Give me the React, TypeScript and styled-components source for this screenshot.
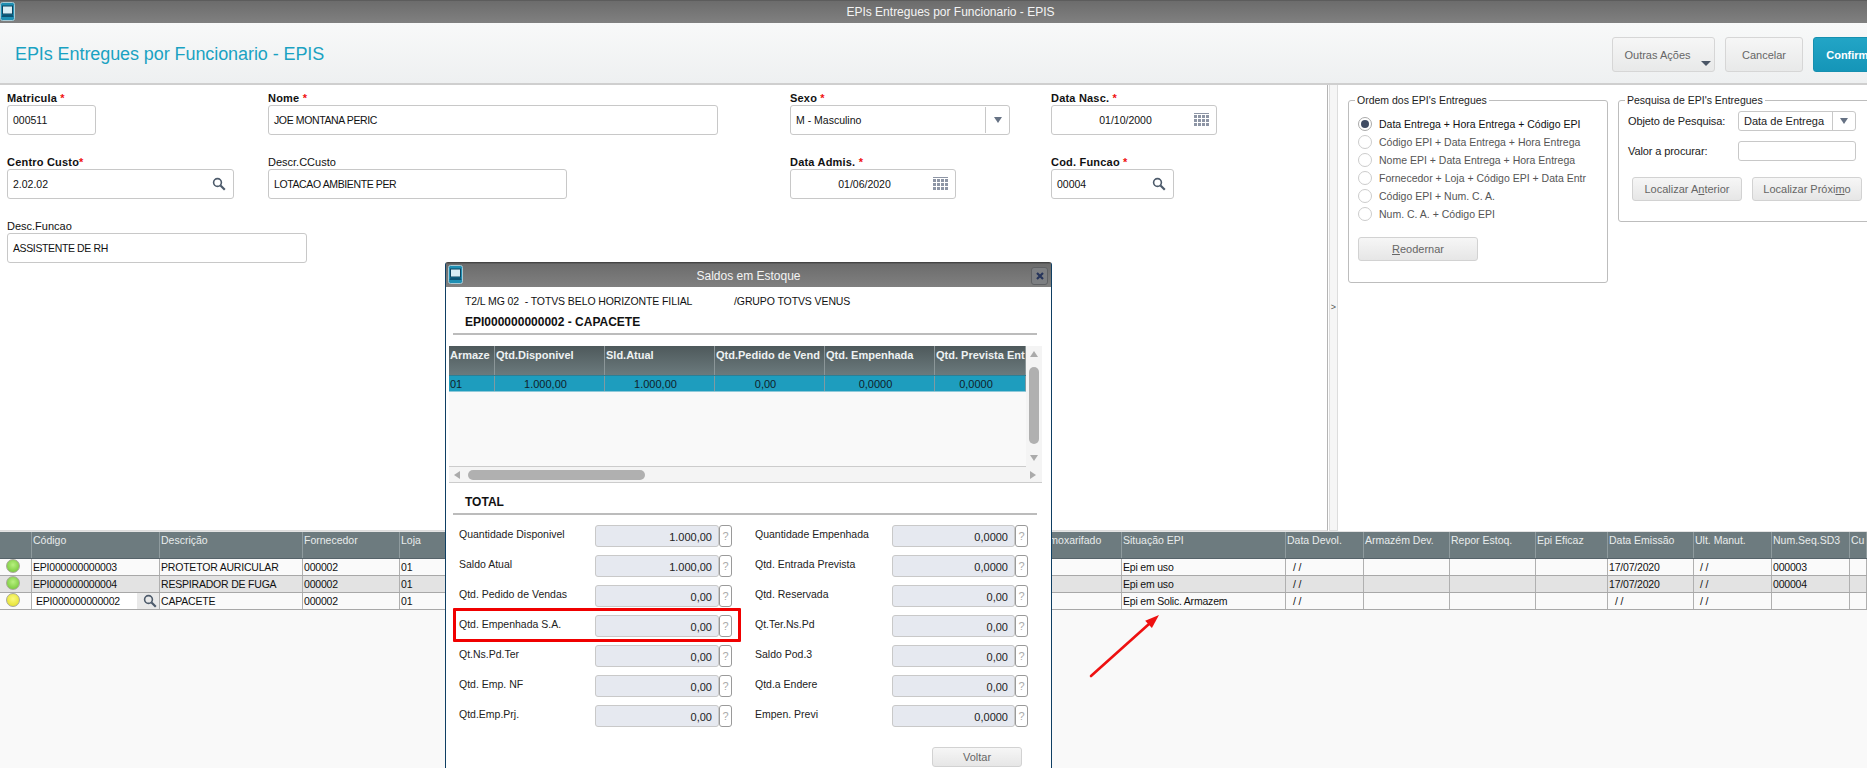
import React from 'react';
import styled, { createGlobalStyle } from 'styled-components';

const GlobalStyle = createGlobalStyle`
  html, body {
    margin: 0;
    overflow: hidden;
    background: #fff;
    font-family: "Liberation Sans", Arial, sans-serif;
    font-size: 11px;
    color: #222;
  }
  * { box-sizing: border-box; }
`;

const Page = styled.div`
  position: relative;
  display: flex;
  flex-direction: column;
  width: 1867px;
  height: 768px;
  overflow: hidden;
`;

const TitleBar = styled.div<{ $height: number }>`
  position: relative;
  flex: none;
  display: flex;
  align-items: center;
  justify-content: center;
  height: ${(p) => p.$height}px;
  background: linear-gradient(#6c6c6c, #808080);
  border-top: 1px solid #5c5c5c;
  color: #f4f4f4;
  font-size: 12px;
`;

const MainTitleText = styled.span`
  padding-left: 34px;
`;

const AppIconBox = styled.span<{ $left: number }>`
  position: absolute;
  left: ${(p) => p.$left}px;
  top: 1px;
  display: flex;
`;

const Header = styled.header`
  flex: none;
  display: flex;
  align-items: flex-start;
  justify-content: space-between;
  height: 62px;
  padding: 14px 0 0 15px;
  background: linear-gradient(#f8f9f9, #eef0f1);
  border-bottom: 2px solid #cfcfcf;
  overflow: hidden;
`;

const PageTitle = styled.h1`
  margin: 7px 0 0;
  font-size: 18px;
  font-weight: 400;
  line-height: 20px;
  letter-spacing: -0.08px;
  color: #1aa2c2;
`;

const Actions = styled.div`
  display: flex;
  gap: 10px;
  margin-right: -25px;
`;

const ActionButton = styled.button<{ $width: number; $primary?: boolean; $menu?: boolean }>`
  position: relative;
  width: ${(p) => p.$width}px;
  height: 35px;
  padding: 0 ${(p) => (p.$menu ? 12 : 0)}px 0 0;
  border: 1px solid ${(p) => (p.$primary ? '#1690b0' : '#d6d6d6')};
  border-radius: 3px;
  background: ${(p) => (p.$primary ? 'linear-gradient(#22a5c6, #1595b8)' : 'linear-gradient(#f6f6f6, #e8e9e9)')};
  color: ${(p) => (p.$primary ? '#fff' : '#666')};
  font: ${(p) => (p.$primary ? 'bold' : 'normal')} 11px "Liberation Sans", Arial, sans-serif;
`;

const ActionCaret = styled.span`
  position: absolute;
  right: 3px;
  bottom: 5px;
  border-left: 5px solid transparent;
  border-right: 5px solid transparent;
  border-top: 5px solid #4a5666;
`;

const Main = styled.main`
  flex: none;
  display: flex;
  height: 446px;
`;

const FormPanel = styled.section`
  flex: none;
  display: grid;
  grid-template-columns: 261px 522px 261px 1fr;
  grid-auto-rows: 64px;
  width: 1328px;
  padding: 5px 0 0 7px;
  border-right: 1px solid #b4b4b4;
  border-bottom: 1px solid #ddd;
`;

const Field = styled.div`
  display: flex;
  flex-direction: column;
`;

const FieldLabel = styled.label<{ $required?: boolean }>`
  height: 15px;
  padding-top: 1px;
  line-height: 14px;
  font-size: 11px;
  font-weight: ${(p) => (p.$required ? 700 : 400)};
  letter-spacing: ${(p) => (p.$required ? 0.2 : 0)}px;
  color: #111;
`;

const Star = styled.span`
  color: #f01010;
`;

const InputBox = styled.div<{ $width: number }>`
  display: flex;
  align-items: center;
  width: ${(p) => p.$width}px;
  height: 30px;
  padding: 0 7px 0 5px;
  background: #fff;
  border: 1px solid #c8c8c8;
  border-radius: 3px;
  font-size: 10.5px;
  color: #111;
`;

const InputValue = styled.span<{ $center?: boolean; $caps?: boolean }>`
  flex: 1;
  text-align: ${(p) => (p.$center ? 'center' : 'left')};
  letter-spacing: ${(p) => (p.$caps ? -0.38 : 0)}px;
`;

const SelectButton = styled.span`
  display: flex;
  align-items: center;
  justify-content: center;
  flex: none;
  width: 24px;
  height: 26px;
  margin-right: -7px;
  border-left: 1px solid #c8c8c8;
`;

const Caret = styled.span`
  border-left: 4px solid transparent;
  border-right: 4px solid transparent;
  border-top: 6px solid #667284;
`;

const Splitter = styled.div`
  flex: none;
  display: flex;
  align-items: center;
  justify-content: center;
  width: 9px;
  padding-bottom: 2px;
  margin-left: 1px;
  background: #f6f6f6;
  border-left: 1px solid #ddd;
  border-right: 1px solid #ddd;
  border-bottom: 1px solid #ddd;
  color: #555;
  font-size: 9px;
`;

const SidePanel = styled.aside`
  flex: none;
  display: flex;
  align-items: flex-start;
  gap: 10px;
  padding: 8px 0 0 10px;
`;

const GroupBox = styled.fieldset<{ $width: number; $height: number }>`
  flex: none;
  width: ${(p) => p.$width}px;
  height: ${(p) => p.$height}px;
  margin: 0;
  padding: 8px 0 0 9px;
  border: 1px solid #bdbdbd;
  border-radius: 3px;
`;

const GroupLegend = styled.legend`
  height: 14px;
  margin-left: -3px;
  padding: 0 2px;
  font-size: 10.5px;
  line-height: 14px;
  color: #222;
`;

const RadioList = styled.div`
  display: flex;
  flex-direction: column;
`;

const RadioRow = styled.div<{ $checked?: boolean }>`
  display: flex;
  align-items: center;
  gap: 7px;
  height: 18px;
  font-size: 10.5px;
  color: ${(p) => (p.$checked ? '#111' : '#555')};
`;

const RadioMark = styled.span<{ $checked?: boolean }>`
  flex: none;
  display: flex;
  align-items: center;
  justify-content: center;
  width: 14px;
  height: 14px;
  background: #fff;
  border: 1px solid ${(p) => (p.$checked ? '#aaa' : '#ccc')};
  border-radius: 50%;
  &::after {
    content: '';
    display: ${(p) => (p.$checked ? 'block' : 'none')};
    width: 8px;
    height: 8px;
    border-radius: 50%;
    background: #3f4b63;
  }
`;

const RadioText = styled.span`
  white-space: nowrap;
`;

const FlatButton = styled.button<{ $width: number; $height: number }>`
  flex: none;
  width: ${(p) => p.$width}px;
  height: ${(p) => p.$height}px;
  padding: 0;
  background: linear-gradient(#f6f6f6, #e6e6e6);
  border: 1px solid #d2d2d2;
  border-radius: 3px;
  color: #666;
  font: 11px "Liberation Sans", Arial, sans-serif;
`;

const ReorderButton = styled(FlatButton)`
  margin-top: 14px;
`;

const SearchForm = styled.div`
  display: grid;
  grid-template-columns: 110px 118px;
  grid-auto-rows: 20px;
  row-gap: 10px;
  align-items: center;
  margin-top: -4px;
`;

const SearchLabel = styled.span`
  font-size: 11px;
  letter-spacing: -0.1px;
  color: #222;
`;

const SmallInput = styled.div`
  display: flex;
  align-items: center;
  height: 20px;
  padding-left: 5px;
  background: #fff;
  border: 1px solid #c8c8c8;
  border-radius: 3px;
  font-size: 11px;
  color: #222;
`;

const SmallSelectButton = styled.span`
  display: flex;
  align-items: center;
  justify-content: center;
  flex: none;
  width: 23px;
  height: 18px;
  margin-left: auto;
  border-left: 1px solid #c8c8c8;
`;

const SearchButtons = styled.div`
  display: flex;
  gap: 10px;
  margin: 16px 0 0 4px;
`;

const GridSection = styled.section`
  flex: 1;
  background: #f9f9f9;
  border-top: 1px solid #e4e4e4;
`;

const COLUMNS = '32px 128px 143px 97px 80px 559px 83px 164px 78px 86px 86px 72px 86px 78px 78px 17px';

const GridHeader = styled.div`
  display: grid;
  grid-template-columns: ${COLUMNS};
  height: 27px;
  background: #6d7b7f;
  border-bottom: 1px solid #56636a;
`;

const GridHeaderCell = styled.div`
  padding: 2px 0 0 1px;
  border-right: 1px solid #8f9b9e;
  overflow: hidden;
  white-space: nowrap;
  font-size: 10.5px;
  color: #e8ecec;
`;

const GridRow = styled.div<{ $alt?: boolean }>`
  display: grid;
  grid-template-columns: ${COLUMNS};
  height: 17px;
  background: ${(p) => (p.$alt ? '#e3e3e3' : '#fafafa')};
  border-bottom: 1px solid #a8a8a8;
`;

const GridCell = styled.div<{ $indent?: number }>`
  display: flex;
  align-items: center;
  padding-left: ${(p) => p.$indent ?? 1}px;
  border-right: 1px solid #b0b0b0;
  overflow: hidden;
  white-space: nowrap;
  font-size: 10.5px;
  letter-spacing: -0.2px;
  color: #111;
`;

const StatusCell = styled.div`
  display: flex;
  align-items: center;
  padding: 0 0 2px 6px;
  border-right: 1px solid #b0b0b0;
`;

const StatusLight = styled.span<{ $color: 'green' | 'yellow' }>`
  width: 14px;
  height: 14px;
  border: 1px solid #a8a89a;
  border-radius: 50%;
  background: ${(p) =>
    p.$color === 'green'
      ? 'radial-gradient(circle at 50% 40%, #b8f080, #6cc22e)'
      : 'radial-gradient(circle at 50% 40%, #fbfa80, #e0dc20)'};
`;

const EditCell = styled.div`
  display: flex;
  align-items: center;
  border-right: 1px solid #b0b0b0;
  background: #e9e9e9;
`;

const EditValue = styled.span`
  flex: none;
  display: flex;
  align-items: center;
  width: 105px;
  height: 100%;
  padding-left: 4px;
  background: #fff;
  font-size: 10.5px;
  letter-spacing: -0.2px;
  color: #111;
`;

const EditSearch = styled.span`
  display: flex;
  margin-left: 6px;
`;

const Modal = styled.div`
  position: absolute;
  left: 445px;
  top: 262px;
  display: flex;
  flex-direction: column;
  width: 607px;
  height: 540px;
  background: #fff;
  border: 1px solid #0f3f63;
  border-top-color: #444;
  border-radius: 3px 3px 0 0;
`;

const CloseButton = styled.span`
  position: absolute;
  right: 3px;
  top: 3px;
  display: flex;
  align-items: center;
  justify-content: center;
  width: 17px;
  height: 18px;
  background: #7d7f82;
  border: 1px solid #5f6164;
  border-radius: 3px;
`;

const CompanyLine = styled.div`
  display: flex;
  height: 15px;
  margin: 7px 0 0 19px;
  font-size: 10.5px;
  line-height: 15px;
  letter-spacing: -0.1px;
  color: #111;
`;

const CompanyName = styled.span`
  width: 269px;
`;

const SectionTitle = styled.div`
  height: 16px;
  margin: 5px 0 0 19px;
  font-size: 12px;
  font-weight: 700;
  line-height: 16px;
  color: #111;
`;

const SectionRule = styled.div`
  flex: none;
  height: 2px;
  margin: 3px 14px 0 7px;
  background: #bcbcbc;
`;

const StockTable = styled.div`
  display: grid;
  grid-template-columns: 1fr 16px;
  grid-template-rows: 121px 16px;
  width: 593px;
  margin: 11px 0 0 3px;
  background: #f9f9f9;
`;

const StockBody = styled.div`
  overflow: hidden;
  border-bottom: 1px solid #ccc;
`;

const STOCK_COLUMNS = '46px 110px 110px 110px 110px 91px';

const StockHeaderRow = styled.div`
  display: grid;
  grid-template-columns: ${STOCK_COLUMNS};
  height: 29px;
  background: linear-gradient(#4e595b, #6b7a7d);
`;

const StockHeaderCell = styled.div`
  padding: 3px 0 0 1px;
  border-right: 1px solid #8b9698;
  white-space: nowrap;
  font-size: 11px;
  font-weight: 700;
  color: #eef2f2;
`;

const StockRow = styled.div`
  display: grid;
  grid-template-columns: ${STOCK_COLUMNS};
  height: 17px;
  background: #1e9dbe;
  border-top: 1px solid #2b7f96;
  border-bottom: 1px solid #8fc9d9;
`;

const StockCell = styled.div<{ $left?: boolean }>`
  display: flex;
  align-items: center;
  justify-content: ${(p) => (p.$left ? 'flex-start' : 'center')};
  padding-left: ${(p) => (p.$left ? 1 : 0)}px;
  padding-right: ${(p) => (p.$left ? 0 : 8)}px;
  border-right: 1px solid #7f9aa2;
  font-size: 11px;
  color: #10222a;
`;

const VerticalTrack = styled.div`
  display: flex;
  flex-direction: column;
  align-items: center;
  justify-content: space-between;
  padding: 5px 0 6px;
  background: #f4f4f4;
`;

const VerticalThumb = styled.div`
  width: 10px;
  height: 77px;
  margin-top: -1px;
  background: #b0b0b0;
  border-radius: 5px;
`;

const HorizontalTrack = styled.div`
  grid-column: 1 / 3;
  display: flex;
  align-items: center;
  justify-content: space-between;
  padding: 0 6px 0 5px;
  background: #f4f4f4;
  border-bottom: 1px solid #ccc;
`;

const HorizontalThumb = styled.div`
  width: 177px;
  height: 10px;
  margin-left: 8px;
  margin-right: auto;
  background: #b0b0b0;
  border-radius: 5px;
`;

const ScrollArrow = styled.span<{ $dir: 'up' | 'down' | 'left' | 'right' }>`
  width: 0;
  height: 0;
  border-style: solid;
  border-color: transparent;
  ${(p) => {
    if (p.$dir === 'up') return 'border-width: 0 4px 6px; border-bottom-color: #aaa;';
    if (p.$dir === 'down') return 'border-width: 6px 4px 0; border-top-color: #aaa;';
    if (p.$dir === 'left') return 'border-width: 4px 6px 4px 0; border-right-color: #aaa;';
    return 'border-width: 4px 0 4px 6px; border-left-color: #aaa;';
  }}
`;

const TotalTitle = styled(SectionTitle)`
  margin-top: 11px;
`;

const TotalsGrid = styled.div`
  display: grid;
  grid-template-columns: 296px 1fr;
  grid-auto-rows: 22px;
  row-gap: 8px;
  margin: 10px 0 0 13px;
`;

const TotalItem = styled.div`
  display: grid;
  grid-template-columns: 136px 124px 13px;
  align-items: stretch;
`;

const TotalItemRight = styled(TotalItem)`
  grid-template-columns: 137px 123px 13px;
`;

const TotalLabel = styled.span`
  padding-top: 3px;
  font-size: 10.5px;
  color: #222;
`;

const TotalValue = styled.span`
  display: flex;
  align-items: center;
  justify-content: flex-end;
  padding: 1px 6px 0 0;
  background: #e6e9f0;
  border: 1px solid #c9c9c9;
  border-radius: 3px;
  font-size: 11px;
  color: #222;
`;

const HelpBox = styled.span`
  display: flex;
  align-items: center;
  justify-content: center;
  background: #fff;
  border: 1px solid #9a9a9a;
  border-radius: 3px;
  font-size: 11px;
  color: #aaa;
`;

const Highlight = styled.div`
  position: absolute;
  left: 7px;
  top: 345px;
  width: 288px;
  height: 34px;
  border: 3px solid #f00000;
  border-radius: 1px;
`;

const ModalFooter = styled.div`
  display: flex;
  justify-content: flex-end;
  margin: 20px 29px 0 0;
`;

const RedArrow = styled.svg`
  position: absolute;
  left: 1085px;
  top: 610px;
`;

const AppIcon = () => (
  <svg width="15" height="19" viewBox="0 0 15 19">
    <rect x="0.5" y="0.5" width="14" height="18" rx="2" fill="#1f8fb3" stroke="#a9c9d4" />
    <rect x="2.5" y="4" width="10" height="8" fill="#d9edf4" stroke="#0d4460" />
    <path d="M1.5 15h12l-1-2.5h-10z" fill="#0d5272" />
  </svg>
);

const SearchIcon = ({ color = '#4d5b6b' }: { color?: string }) => (
  <svg width="14" height="14" viewBox="0 0 14 14" fill="none" stroke={color}>
    <circle cx="5.5" cy="5.5" r="3.9" strokeWidth="1.6" />
    <path d="M8.5 8.5l4.3 4.3" strokeWidth="2.2" />
  </svg>
);

const CalendarIcon = () => (
  <svg width="15" height="14" viewBox="0 0 15 14" fill="#8d95a5">
    <rect x="0" y="0" width="15" height="1" />
    {[2, 6, 10].map((y) =>
      [0, 4, 8, 12].map((x) => <rect key={`${x}-${y}`} x={x} y={y} width="3" height="3" />),
    )}
  </svg>
);

const RADIOS = [
  'Data Entrega + Hora Entrega + Código EPI',
  'Código EPI + Data Entrega + Hora Entrega',
  'Nome EPI + Data Entrega + Hora Entrega',
  'Fornecedor + Loja + Código EPI + Data Entr',
  'Código EPI +  Num. C. A.',
  'Num. C. A. + Código EPI',
];

const GRID_HEADERS = [
  '',
  'Código',
  'Descrição',
  'Fornecedor',
  'Loja',
  '',
  'Almoxarifado',
  'Situação EPI',
  'Data Devol.',
  'Armazém Dev.',
  'Repor Estoq.',
  'Epi Eficaz',
  'Data Emissão',
  'Ult. Manut.',
  'Num.Seq.SD3',
  'Cu',
];

const STOCK_HEADERS = ['Armaze', 'Qtd.Disponivel', 'Sld.Atual', 'Qtd.Pedido de Vend', 'Qtd. Empenhada', 'Qtd. Prevista Ent'];

const TOTALS = [
  ['Quantidade Disponivel', '1.000,00', 'Quantidade Empenhada', '0,0000'],
  ['Saldo Atual', '1.000,00', 'Qtd. Entrada Prevista', '0,0000'],
  ['Qtd. Pedido de Vendas', '0,00', 'Qtd. Reservada', '0,00'],
  ['Qtd. Empenhada S.A.', '0,00', 'Qt.Ter.Ns.Pd', '0,00'],
  ['Qt.Ns.Pd.Ter', '0,00', 'Saldo Pod.3', '0,00'],
  ['Qtd. Emp. NF', '0,00', 'Qtd.a Endere', '0,00'],
  ['Qtd.Emp.Prj.', '0,00', 'Empen. Previ', '0,0000'],
];

const TrailingCells = ({ situacao, emissao, seq }: { situacao: string; emissao?: string; seq?: string }) => (
  <>
    <GridCell />
    <GridCell />
    <GridCell>{situacao}</GridCell>
    <GridCell $indent={7}>/ /</GridCell>
    <GridCell />
    <GridCell />
    <GridCell />
    <GridCell $indent={emissao ? 1 : 7}>{emissao ?? '/ /'}</GridCell>
    <GridCell $indent={6}>/ /</GridCell>
    <GridCell>{seq}</GridCell>
    <GridCell />
  </>
);

export default function App() {
  return (
    <Page>
      <GlobalStyle />
      <TitleBar $height={23}>
        <AppIconBox $left={0}>
          <AppIcon />
        </AppIconBox>
        <MainTitleText>EPIs Entregues por Funcionario - EPIS</MainTitleText>
      </TitleBar>

      <Header>
        <PageTitle>EPIs Entregues por Funcionario - EPIS</PageTitle>
        <Actions>
          <ActionButton $width={103} $menu>
            Outras Ações
            <ActionCaret />
          </ActionButton>
          <ActionButton $width={78}>Cancelar</ActionButton>
          <ActionButton $width={79} $primary>
            Confirmar
          </ActionButton>
        </Actions>
      </Header>

      <Main>
        <FormPanel>
          <Field>
            <FieldLabel $required>
              Matricula<Star> *</Star>
            </FieldLabel>
            <InputBox $width={89}>
              <InputValue>000511</InputValue>
            </InputBox>
          </Field>
          <Field>
            <FieldLabel $required>
              Nome<Star> *</Star>
            </FieldLabel>
            <InputBox $width={450}>
              <InputValue $caps>JOE MONTANA PERIC</InputValue>
            </InputBox>
          </Field>
          <Field>
            <FieldLabel $required>
              Sexo<Star> *</Star>
            </FieldLabel>
            <InputBox $width={220}>
              <InputValue>M - Masculino</InputValue>
              <SelectButton>
                <Caret />
              </SelectButton>
            </InputBox>
          </Field>
          <Field>
            <FieldLabel $required>
              Data Nasc.<Star> *</Star>
            </FieldLabel>
            <InputBox $width={166}>
              <InputValue $center>01/10/2000</InputValue>
              <CalendarIcon />
            </InputBox>
          </Field>

          <Field>
            <FieldLabel $required>
              Centro Custo<Star>*</Star>
            </FieldLabel>
            <InputBox $width={227}>
              <InputValue>2.02.02</InputValue>
              <SearchIcon />
            </InputBox>
          </Field>
          <Field>
            <FieldLabel>Descr.CCusto</FieldLabel>
            <InputBox $width={299}>
              <InputValue $caps>LOTACAO AMBIENTE PER</InputValue>
            </InputBox>
          </Field>
          <Field>
            <FieldLabel $required>
              Data Admis.<Star> *</Star>
            </FieldLabel>
            <InputBox $width={166}>
              <InputValue $center>01/06/2020</InputValue>
              <CalendarIcon />
            </InputBox>
          </Field>
          <Field>
            <FieldLabel $required>
              Cod. Funcao<Star> *</Star>
            </FieldLabel>
            <InputBox $width={123}>
              <InputValue>00004</InputValue>
              <SearchIcon />
            </InputBox>
          </Field>

          <Field>
            <FieldLabel>Desc.Funcao</FieldLabel>
            <InputBox $width={300}>
              <InputValue $caps>ASSISTENTE DE RH</InputValue>
            </InputBox>
          </Field>
        </FormPanel>

        <Splitter>&gt;</Splitter>

        <SidePanel>
          <GroupBox $width={260} $height={190}>
            <GroupLegend>Ordem dos EPI's Entregues</GroupLegend>
            <RadioList>
              {RADIOS.map((text, i) => (
                <RadioRow key={text} $checked={i === 0}>
                  <RadioMark $checked={i === 0} />
                  <RadioText>{text}</RadioText>
                </RadioRow>
              ))}
            </RadioList>
            <ReorderButton $width={120} $height={24}>
              <u>R</u>eodernar
            </ReorderButton>
          </GroupBox>

          <GroupBox $width={262} $height={129}>
            <GroupLegend>Pesquisa de EPI's Entregues</GroupLegend>
            <SearchForm>
              <SearchLabel>Objeto de Pesquisa:</SearchLabel>
              <SmallInput>
                Data de Entrega
                <SmallSelectButton>
                  <Caret />
                </SmallSelectButton>
              </SmallInput>
              <SearchLabel>Valor a procurar:</SearchLabel>
              <SmallInput />
            </SearchForm>
            <SearchButtons>
              <FlatButton $width={110} $height={24}>
                Localizar A<u>n</u>terior
              </FlatButton>
              <FlatButton $width={110} $height={24}>
                Localizar Próxi<u>m</u>o
              </FlatButton>
            </SearchButtons>
          </GroupBox>
        </SidePanel>
      </Main>

      <GridSection>
        <GridHeader>
          {GRID_HEADERS.map((title, i) => (
            <GridHeaderCell key={i}>{title}</GridHeaderCell>
          ))}
        </GridHeader>
        <GridRow>
          <StatusCell>
            <StatusLight $color="green" />
          </StatusCell>
          <GridCell>EPI000000000003</GridCell>
          <GridCell>PROTETOR AURICULAR</GridCell>
          <GridCell>000002</GridCell>
          <GridCell>01</GridCell>
          <TrailingCells situacao="Epi em uso" emissao="17/07/2020" seq="000003" />
        </GridRow>
        <GridRow $alt>
          <StatusCell>
            <StatusLight $color="green" />
          </StatusCell>
          <GridCell>EPI000000000004</GridCell>
          <GridCell>RESPIRADOR DE FUGA</GridCell>
          <GridCell>000002</GridCell>
          <GridCell>01</GridCell>
          <TrailingCells situacao="Epi em uso" emissao="17/07/2020" seq="000004" />
        </GridRow>
        <GridRow>
          <StatusCell>
            <StatusLight $color="yellow" />
          </StatusCell>
          <EditCell>
            <EditValue>EPI000000000002</EditValue>
            <EditSearch>
              <SearchIcon />
            </EditSearch>
          </EditCell>
          <GridCell>CAPACETE</GridCell>
          <GridCell>000002</GridCell>
          <GridCell>01</GridCell>
          <TrailingCells situacao="Epi em Solic. Armazem" />
        </GridRow>
      </GridSection>

      <RedArrow width="80" height="72" viewBox="0 0 80 72">
        <path d="M6 66L64 14" stroke="#ee1111" strokeWidth="2.6" strokeLinecap="round" />
        <path d="M74 5L60.2 10.7L66.9 18.1z" fill="#ee1111" />
      </RedArrow>

      <Modal>
        <TitleBar $height={24}>
          <AppIconBox $left={2}>
            <AppIcon />
          </AppIconBox>
          Saldos em Estoque
          <CloseButton>
            <svg width="8" height="8" viewBox="0 0 8 8" stroke="#26345a" strokeWidth="2.2">
              <path d="M1 1l6 6M7 1L1 7" />
            </svg>
          </CloseButton>
        </TitleBar>

        <CompanyLine>
          <CompanyName>T2/L MG 02 &nbsp;- TOTVS BELO HORIZONTE FILIAL</CompanyName>
          <span>/GRUPO TOTVS VENUS</span>
        </CompanyLine>
        <SectionTitle>EPI000000000002 - CAPACETE</SectionTitle>
        <SectionRule />

        <StockTable>
          <StockBody>
            <StockHeaderRow>
              {STOCK_HEADERS.map((title) => (
                <StockHeaderCell key={title}>{title}</StockHeaderCell>
              ))}
            </StockHeaderRow>
            <StockRow>
              <StockCell $left>01</StockCell>
              <StockCell>1.000,00</StockCell>
              <StockCell>1.000,00</StockCell>
              <StockCell>0,00</StockCell>
              <StockCell>0,0000</StockCell>
              <StockCell>0,0000</StockCell>
            </StockRow>
          </StockBody>
          <VerticalTrack>
            <ScrollArrow $dir="up" />
            <VerticalThumb />
            <ScrollArrow $dir="down" />
          </VerticalTrack>
          <HorizontalTrack>
            <ScrollArrow $dir="left" />
            <HorizontalThumb />
            <ScrollArrow $dir="right" />
          </HorizontalTrack>
        </StockTable>

        <TotalTitle>TOTAL</TotalTitle>
        <SectionRule />

        <TotalsGrid>
          {TOTALS.map(([leftLabel, leftValue, rightLabel, rightValue]) => (
            <React.Fragment key={leftLabel}>
              <TotalItem>
                <TotalLabel>{leftLabel}</TotalLabel>
                <TotalValue>{leftValue}</TotalValue>
                <HelpBox>?</HelpBox>
              </TotalItem>
              <TotalItemRight>
                <TotalLabel>{rightLabel}</TotalLabel>
                <TotalValue>{rightValue}</TotalValue>
                <HelpBox>?</HelpBox>
              </TotalItemRight>
            </React.Fragment>
          ))}
        </TotalsGrid>

        <ModalFooter>
          <FlatButton $width={90} $height={20}>
            Voltar
          </FlatButton>
        </ModalFooter>

        <Highlight />
      </Modal>
    </Page>
  );
}
